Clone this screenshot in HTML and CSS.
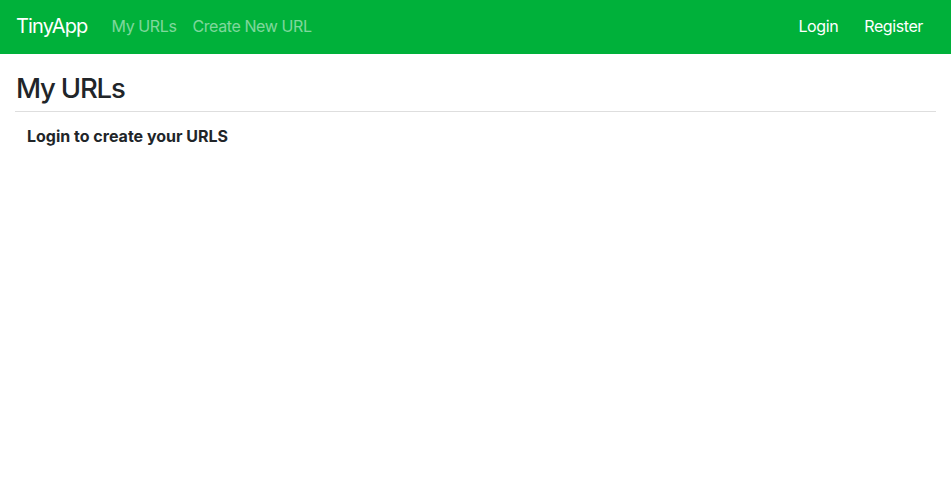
FILE: index.html
```html
<!DOCTYPE html>
<html lang="en">
<head>
<meta charset="utf-8">
<title>TinyApp</title>
<link rel="stylesheet" href="styles.css">
</head>
<body>
<nav class="navbar">
  <a class="brand" href="#">TinyApp</a>
  <div class="nav-left">
    <a class="nav-link muted" href="#">My URLs</a>
    <a class="nav-link muted" href="#">Create New URL</a>
  </div>
  <div class="nav-right">
    <a class="nav-link" href="#">Login</a>
    <a class="nav-link" href="#">Register</a>
  </div>
</nav>
<main class="main">
  <h1 class="title">My URLs</h1>
  <div class="content">
    <p class="notice">Login to create your URLS</p>
  </div>
</main>
</body>
</html>
```
FILE: styles.css
```css
* { box-sizing: border-box; }
body {
  margin: 0;
  font-family: Inter, "Liberation Sans", sans-serif;
  color: #212529;
  background: #fff;
}
.navbar {
  display: flex;
  align-items: center;
  height: 54px;
  padding: 0 20px 2px 16px;
  background: #00b13a;
}
.brand {
  font-size: 20px;
  line-height: 30px;
  letter-spacing: -0.85px;
  color: #fff;
  text-decoration: none;
  margin-right: 16px;
}
.nav-left, .nav-right {
  display: flex;
}
.nav-right {
  margin-left: auto;
  gap: 10px;
}
.nav-link {
  font-size: 16px;
  line-height: 24px;
  padding: 8px;
  letter-spacing: -0.4px;
  color: #fff;
  text-decoration: none;
}
.nav-link.muted {
  color: rgba(255, 255, 255, 0.5);
}
.main {
  padding: 0 15px 0 15px;
}
.title {
  margin: 0;
  padding: 17px 0 6px 1px;
  font-size: 27.5px;
  font-weight: 500;
  line-height: 34px;
  letter-spacing: -1.2px;
  border-bottom: 1px solid #dedede;
}
.content {
  padding: 12px;
}
.notice {
  margin: 0;
  font-size: 16px;
  font-weight: 700;
  line-height: 24px;
}
```
